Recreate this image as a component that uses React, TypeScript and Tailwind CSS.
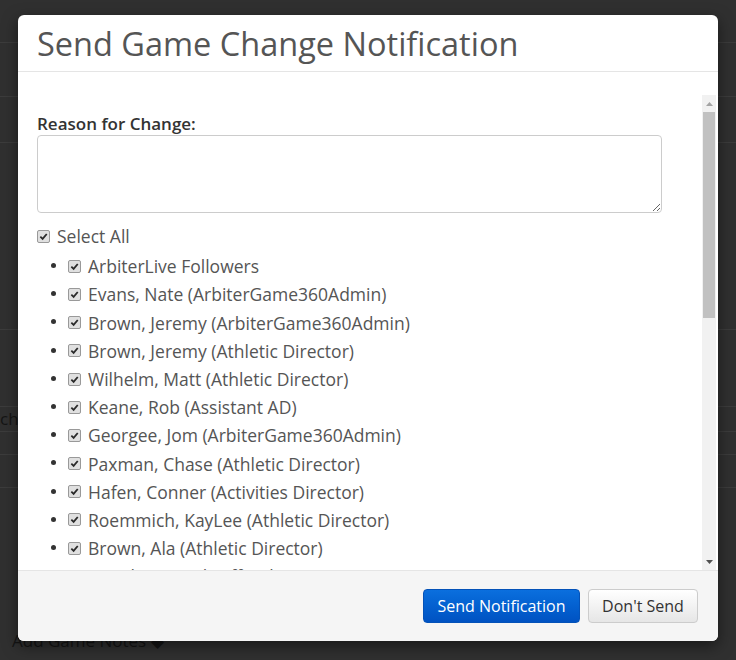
import React from 'react'

const recipients = [
  'ArbiterLive Followers',
  'Evans, Nate (ArbiterGame360Admin)',
  'Brown, Jeremy (ArbiterGame360Admin)',
  'Brown, Jeremy (Athletic Director)',
  'Wilhelm, Matt (Athletic Director)',
  'Keane, Rob (Assistant AD)',
  'Georgee, Jom (ArbiterGame360Admin)',
  'Paxman, Chase (Athletic Director)',
  'Hafen, Conner (Activities Director)',
  'Roemmich, KayLee (Athletic Director)',
  'Brown, Ala (Athletic Director)',
  'Mauder, David (Officials)',
]

function Check() {
  return (
    <span className="inline-flex items-center justify-center w-[13px] h-[13px] shrink-0 rounded-[2px] border border-[#999] bg-[#e0e0e0]">
      <svg width="9" height="9" viewBox="0 0 10 10">
        <path d="M1.5 5.2 L4 7.6 L8.6 2.2" fill="none" stroke="#2a2a2a" strokeWidth="2" />
      </svg>
    </span>
  )
}

function Backdrop() {
  return (
    <div className="flex flex-col h-full text-[17px] text-[#151515]">
      <div className="h-[43px] border-b border-[#3c3c3c]" />
      <div className="h-[54px] border-b border-[#3c3c3c]" />
      <div className="h-[46px] border-b border-[#3c3c3c]" />
      <div className="h-[187px] border-b border-[#3c3c3c]" />
      <div className="h-[77px] border-b border-[#3c3c3c]" />
      <div className="h-[25px] border-b border-[#3c3c3c] leading-[24px]">ch</div>
      <div className="h-[23px] border-b border-[#3c3c3c]" />
      <div className="h-[33px] border-b border-[#3c3c3c]" />
      <div className="flex-1 flex items-end pl-[12px] pb-[8px]">
        <span className="leading-[22px]">Add Game Notes ◆</span>
      </div>
    </div>
  )
}

export default function App() {
  return (
    <div
      className="relative w-full h-[660px] overflow-hidden bg-[#303030]"
      style={{ fontFamily: '"Open Sans", "Liberation Sans", sans-serif' }}
    >
      <Backdrop />

      {/* Modal dialog */}
      <div className="absolute left-[18px] top-[15px] w-[700px] h-[626px] flex flex-col bg-white rounded-[6px] overflow-hidden shadow-[0_5px_15px_rgba(0,0,0,0.5)]">
        {/* Header */}
        <div className="h-[57px] shrink-0 flex items-center px-[19px] border-b border-[#e5e5e5]">
          <h2 className="text-[32.5px] leading-[40px] text-[#555] pt-[2px]">Send Game Change Notification</h2>
        </div>

        {/* Body */}
        <div className="flex-1 min-h-0 flex flex-col pt-[23px] pr-[2px]">
          <div className="flex-1 min-h-0 flex">
            <div className="flex-1 min-w-0 overflow-hidden pl-[19px] pt-[18px]">
              <label className="block text-[17px] leading-[22px] font-semibold text-[#333]">Reason for Change:</label>
              <textarea className="block w-[625px] h-[78px] border border-[#ccc] rounded-[4px] outline-none" />

              <div className="mt-[9px] h-[28px] flex items-center gap-[7px] text-[17.5px] text-[#555]">
                <Check />
                <span>Select All</span>
              </div>

              <ul className="list-disc pl-[31px] text-[17.5px] text-[#555] marker:text-[#333] marker:text-[14px]">
                {recipients.map((r) => (
                  <li key={r} className="h-[28.2px] leading-[28.2px]">
                    <span className="inline-flex items-center gap-[7px] align-middle">
                      <Check />
                      <span>{r}</span>
                    </span>
                  </li>
                ))}
              </ul>
            </div>

            {/* Scrollbar */}
            <div className="w-[14px] shrink-0 flex flex-col bg-[#f1f1f1]">
              <div className="h-[17px] flex items-center justify-center">
                <svg width="7" height="4" viewBox="0 0 7 4"><path d="M0 4 L3.5 0 L7 4 Z" fill="#a3a3a3" /></svg>
              </div>
              <div className="h-[206px] mx-[1px] bg-[#c1c1c1]" />
              <div className="flex-1" />
              <div className="h-[17px] flex items-center justify-center">
                <svg width="7" height="4" viewBox="0 0 7 4"><path d="M0 0 L7 0 L3.5 4 Z" fill="#505050" /></svg>
              </div>
            </div>
          </div>
        </div>

        {/* Footer */}
        <div className="h-[71px] shrink-0 flex items-center justify-end gap-[8px] pr-[20px] bg-[#f5f5f5] border-t border-[#e5e5e5]">
          <button className="h-[34px] w-[157px] rounded-[4px] border border-[#0452b8] bg-gradient-to-b from-[#0b6fde] to-[#0052c2] text-white text-[16px]">
            Send Notification
          </button>
          <button className="h-[34px] w-[110px] rounded-[4px] border border-[#ccc] bg-gradient-to-b from-white to-[#e6e6e6] text-[#333] text-[16px]">
            Don't Send
          </button>
        </div>
      </div>
    </div>
  )
}
